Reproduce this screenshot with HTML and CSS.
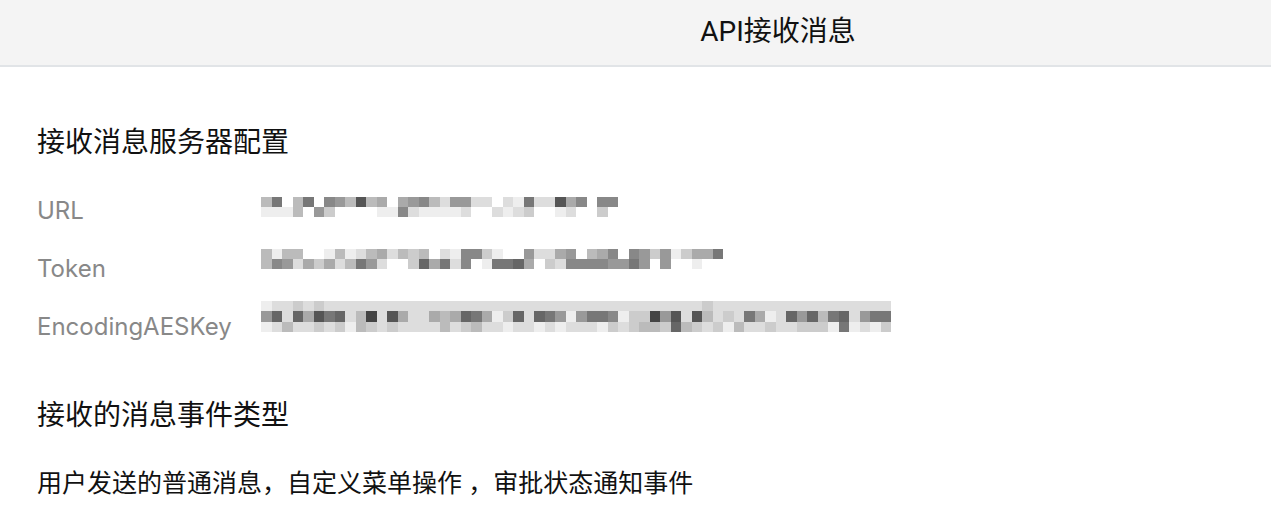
FILE: index.html
```html
<!DOCTYPE html>
<html lang="zh-CN">
<head>
<meta charset="utf-8">
<meta name="viewport" content="width=device-width, initial-scale=1">
<title>API接收消息</title>
<link rel="stylesheet" href="styles.css">
</head>
<body>
<header class="topbar">
  <h1 class="topbar-title">API接收消息</h1>
</header>
<main class="content">
  <section class="config">
    <h2 class="section-title">接收消息服务器配置</h2>
    <dl class="fields">
      <dt class="field-label">URL</dt>
      <dd class="field-value" data-mask="b7fb7f89b5bafa98bd99ddfde7dd5a8f88 eeebf9cffffee8deeeedffdedcffedffcff"></dd>
      <dt class="field-label">Token</dt>
      <dd class="field-value" data-mask="bebbffebedbadbcbfde88ceff9dda9fba8f89c9ecaa7 b89dacadb79dffc6a7d8fe776afcd88889979f9ffeff"></dd>
      <dt class="field-label">EncodingAESKey</dt>
      <dd class="field-value" data-mask="eddcdcddddddddddddddddddddddddddddddddddddcddddddddddddddddd 96d6a576db4d5addaba67aec6d679e9778ecc495d5bdcd7aed696b76d977 edbddcdcebcdcddddbdcbddeddededddecdcbbc6bcdcebddcddccce7edec"></dd>
    </dl>
  </section>
  <section class="events">
    <h2 class="section-title">接收的消息事件类型</h2>
    <p class="events-text">用户发送的普通消息，自定义菜单操作 ，审批状态通知事件</p>
  </section>
</main>
<script src="mask.js"></script>
</body>
</html>
```
FILE: styles.css
```css
* {
  box-sizing: border-box;
}

body {
  margin: 0;
  background: #fff;
  color: #111;
  font-family: Roboto, "Noto Sans CJK SC", sans-serif;
}

.topbar {
  padding: 12px 0 13px 285px;
  background: #f4f4f4;
  border-bottom: 2px solid #e1e4e7;
}

.topbar-title {
  margin: 0;
  font-size: 28px;
  font-weight: 400;
  line-height: 40px;
  text-align: center;
}

.content {
  padding: 56px 37px 4px;
}

.section-title {
  margin: 0;
  font-size: 28px;
  font-weight: 400;
  line-height: 40px;
}

.fields {
  display: grid;
  grid-template-columns: 224px 1fr;
  row-gap: 18px;
  margin: 28px 0 0;
}

.field-label {
  color: #888;
  font-family: Inter, sans-serif;
  font-size: 24px;
  line-height: 40px;
}

.field-value {
  display: flex;
  align-items: flex-start;
  height: 40px;
  margin: 0;
}

.field-value:nth-of-type(1) {
  padding-top: 6px;
}

.mask {
  display: block;
  flex: none;
}

.field-value:nth-of-type(3) .mask {
  margin-top: -6px;
}

.events {
  margin-top: 49px;
}

.events-text {
  margin: 28px 0 0;
  font-size: 25px;
  line-height: 40px;
}
```
FILE: mask.js
```js
// Draws each hidden value as a mosaic; one hex digit is the lightness of one cell.
const NS = "http://www.w3.org/2000/svg";

document.querySelectorAll("[data-mask]").forEach((field) => {
  const rows = field.dataset.mask.split(" ");
  const width = rows[0].length * 10.5;
  const height = Math.floor(rows.length * 10.4);
  const svg = document.createElementNS(NS, "svg");
  svg.setAttribute("class", "mask");
  svg.setAttribute("role", "img");
  svg.setAttribute("aria-label", "已隐藏");
  svg.setAttribute("width", Math.round(width));
  svg.setAttribute("height", height);
  svg.setAttribute("viewBox", `0 0 ${rows[0].length} ${rows.length}`);
  svg.setAttribute("preserveAspectRatio", "none");
  svg.setAttribute("shape-rendering", "crispEdges");
  rows.forEach((row, y) => {
    [...row].forEach((digit, x) => {
      if (digit === "f") return;
      const cell = document.createElementNS(NS, "rect");
      cell.setAttribute("x", x);
      cell.setAttribute("y", y);
      cell.setAttribute("width", 1);
      cell.setAttribute("height", 1);
      cell.setAttribute("fill", `#${digit}${digit}${digit}`);
      svg.append(cell);
    });
  });
  field.append(svg);
});
```
